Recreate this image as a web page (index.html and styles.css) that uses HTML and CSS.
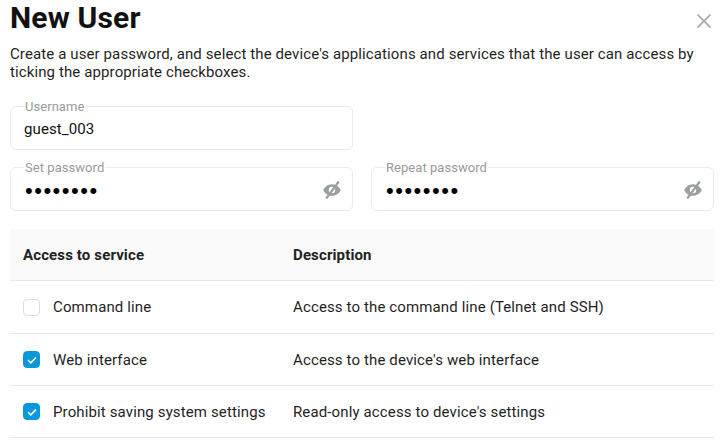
FILE: index.html
```
<!DOCTYPE html>
<html lang="en">
<head>
<meta charset="utf-8">
<title>New User</title>
<link rel="stylesheet" href="styles.css">
</head>
<body>
<div class="dialog">
  <header class="head">
    <h1>New User</h1>
    <svg class="close" width="16" height="16" viewBox="0 0 16 16"><path d="M1.5 1.5l13 13M14.5 1.5l-13 13" stroke="#9aa3a8" stroke-width="1.7" fill="none"/></svg>
  </header>
  <p class="intro">Create a user password, and select the device's applications and services that the user can access by ticking the appropriate checkboxes.</p>
  <div class="fields">
    <fieldset class="field"><legend>Username</legend><span class="value">guest_003</span></fieldset>
    <div></div>
    <fieldset class="field"><legend>Set password</legend><span class="dots">••••••••</span>
      <svg class="eye" width="20" height="20" viewBox="0 0 20 20"><path fill-rule="evenodd" d="M10 4.200c4.200 0 7.400 2.800 8.800 5.800-1.400 3-4.600 5.800-8.800 5.800S2.600 13 1.200 10C2.600 7 5.800 4.200 10 4.200zM10 6.800a3.200 3.200 0 1 0 0 6.400 3.200 3.200 0 0 0 0-6.400z" fill="#9aa09f"/><path d="M4.200 18.500L16.800 1.500" stroke="#9aa09f" stroke-width="2.200"/></svg>
    </fieldset>
    <fieldset class="field"><legend>Repeat password</legend><span class="dots">••••••••</span>
      <svg class="eye" width="20" height="20" viewBox="0 0 20 20"><path fill-rule="evenodd" d="M10 4.200c4.200 0 7.400 2.800 8.800 5.800-1.400 3-4.600 5.800-8.800 5.800S2.600 13 1.200 10C2.600 7 5.800 4.200 10 4.200zM10 6.800a3.200 3.200 0 1 0 0 6.400 3.200 3.200 0 0 0 0-6.400z" fill="#9aa09f"/><path d="M4.200 18.500L16.800 1.500" stroke="#9aa09f" stroke-width="2.200"/></svg>
    </fieldset>
  </div>
  <div class="table">
    <div class="row header"><span class="c1">Access to service</span><span>Description</span></div>
    <div class="row r1">
      <span class="c1 check-cell"><i class="box"></i>Command line</span>
      <span>Access to the command line (Telnet and SSH)</span>
    </div>
    <div class="row">
      <span class="c1 check-cell"><i class="box on"><svg width="18" height="18" viewBox="0 0 18 18"><path d="M5 9.200l2.800 2.600L13 6.500" stroke="#fff" stroke-width="1.600" fill="none"/></svg></i>Web interface</span>
      <span>Access to the device's web interface</span>
    </div>
    <div class="row">
      <span class="c1 check-cell"><i class="box on"><svg width="18" height="18" viewBox="0 0 18 18"><path d="M5 9.200l2.800 2.600L13 6.500" stroke="#fff" stroke-width="1.600" fill="none"/></svg></i>Prohibit saving system settings</span>
      <span>Read-only access to device's settings</span>
    </div>
  </div>
</div>
</body>
</html>
```
FILE: styles.css
```
* { box-sizing: border-box; }
html, body { margin: 0; height: 100%; overflow: hidden; background: #fff; }
body { font-family: Roboto, "Liberation Sans", sans-serif; color: #1a1a1a; }
.dialog { padding: 0 10px; }
.head { display: flex; justify-content: space-between; align-items: flex-start; height: 45px; }
h1 { margin: 0; font-size: 30px; line-height: 36px; font-weight: 700; color: #111; letter-spacing: .18px; }
.close { margin: 13px 2px 0 0; }
.intro { margin: 0; font-size: 15px; line-height: 18px; color: #1f1f1f; letter-spacing: .11px; }
.fields { display: grid; grid-template-columns: 343px 343px; column-gap: 18px; row-gap: 9px; margin-top: 17px; }
.field { margin: 0; padding: 0 10px 0 14px; height: 52px; border: 1px solid #ebebeb; border-radius: 6px; display: flex; align-items: center; justify-content: space-between; min-width: 0; }
.field legend { font-size: 13px; line-height: 14px; color: #9a9a9a; padding: 2px 1px 0 1px; margin-left: -1px; letter-spacing: .05px; }
.value { font-size: 15px; line-height: 18px; color: #111; margin: -5px 0 0 -1px; letter-spacing: .1px; }
.dots { font-size: 22px; line-height: 18px; color: #000; font-family: "Liberation Sans", sans-serif; letter-spacing: 1.5px; margin-top: -3px; }
.eye { margin-top: -6px; }
.table { margin-top: 18px; font-size: 15px; color: #1f1f1f; }
.row { display: grid; grid-template-columns: 270px 1fr; align-items: center; padding-left: 13px; height: 52px; border-bottom: 1px solid #e8e8e8; letter-spacing: .13px; }
.row.r1 { height: 53px; }
.row.header { height: 52px; background: #fafafa; font-weight: 700; color: #222; }
.check-cell { display: flex; align-items: center; gap: 13px; }
.box { width: 17px; height: 17px; border-radius: 4px; border: 1px solid #dedede; background: #fff; display: block; flex: none; }
.box.on { background: #0a98dc; border-color: #0a98dc; }
.box.on svg { display: block; margin: -1px; }
```
